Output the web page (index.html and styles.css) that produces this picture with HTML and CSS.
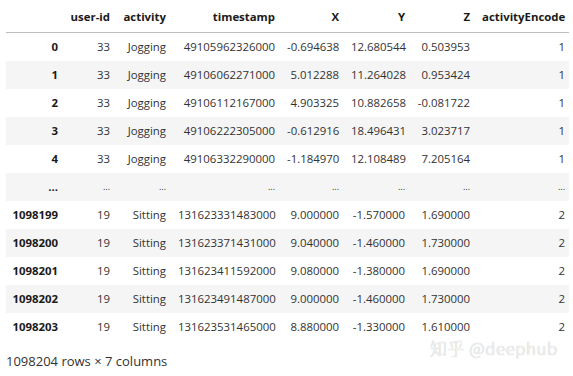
FILE: index.html
```html
<!DOCTYPE html>
<html>
<head>
<meta charset="utf-8">
<link rel="stylesheet" href="styles.css">
</head>
<body>
<div class="output">
<table class="df">
<colgroup>
<col class="c-idx"><col class="c-uid"><col class="c-act"><col class="c-ts"><col class="c-x"><col class="c-y"><col class="c-z"><col class="c-enc">
</colgroup>
<thead>
<tr><th></th><th>user-id</th><th>activity</th><th>timestamp</th><th>X</th><th>Y</th><th>Z</th><th>activityEncode</th></tr>
</thead>
<tbody>
<tr><th>0</th><td>33</td><td>Jogging</td><td>49105962326000</td><td>-0.694638</td><td>12.680544</td><td>0.503953</td><td>1</td></tr>
<tr><th>1</th><td>33</td><td>Jogging</td><td>49106062271000</td><td>5.012288</td><td>11.264028</td><td>0.953424</td><td>1</td></tr>
<tr><th>2</th><td>33</td><td>Jogging</td><td>49106112167000</td><td>4.903325</td><td>10.882658</td><td>-0.081722</td><td>1</td></tr>
<tr><th>3</th><td>33</td><td>Jogging</td><td>49106222305000</td><td>-0.612916</td><td>18.496431</td><td>3.023717</td><td>1</td></tr>
<tr><th>4</th><td>33</td><td>Jogging</td><td>49106332290000</td><td>-1.184970</td><td>12.108489</td><td>7.205164</td><td>1</td></tr>
<tr class="ellipsis"><th>...</th><td>...</td><td>...</td><td>...</td><td>...</td><td>...</td><td>...</td><td>...</td></tr>
<tr><th>1098199</th><td>19</td><td>Sitting</td><td>131623331483000</td><td>9.000000</td><td>-1.570000</td><td>1.690000</td><td>2</td></tr>
<tr><th>1098200</th><td>19</td><td>Sitting</td><td>131623371431000</td><td>9.040000</td><td>-1.460000</td><td>1.730000</td><td>2</td></tr>
<tr><th>1098201</th><td>19</td><td>Sitting</td><td>131623411592000</td><td>9.080000</td><td>-1.380000</td><td>1.690000</td><td>2</td></tr>
<tr><th>1098202</th><td>19</td><td>Sitting</td><td>131623491487000</td><td>9.000000</td><td>-1.460000</td><td>1.730000</td><td>2</td></tr>
<tr><th>1098203</th><td>19</td><td>Sitting</td><td>131623531465000</td><td>8.880000</td><td>-1.330000</td><td>1.610000</td><td>2</td></tr>
</tbody>
</table>
<p class="shape">1098204 rows × 7 columns</p>
</div>
<div class="watermark">知乎 @deephub</div>
</body>
</html>
```
FILE: styles.css
```css
html, body {
  margin: 0;
  padding: 0;
  background: #ffffff;
}
body {
  font-family: "Open Sans", "Noto Sans", "Noto Sans CJK SC", sans-serif;
  color: #1a1a1a;
  position: relative;
  width: 573px;
  height: 376px;
  overflow: hidden;
}
.output {
  padding: 0 0 0 6px;
}
.df {
  border-collapse: collapse;
  border-spacing: 0;
  table-layout: fixed;
  width: 563px;
  font-size: 11.4px;
}
.c-idx { width: 58px; }
.c-uid { width: 52px; }
.c-act { width: 56px; }
.c-ts { width: 109px; }
.c-x { width: 64px; }
.c-y { width: 66px; }
.c-z { width: 65px; }
.c-enc { width: 93px; }
.df th, .df td {
  text-align: right;
  vertical-align: middle;
  padding: 0 6px;
  height: 28px;
  line-height: 16px;
  white-space: nowrap;
  border: none;
}
.df thead th {
  font-weight: 700;
  height: 30px;
  padding-top: 2px;
  padding-bottom: 0;
  border-bottom: 1px solid #bdbdbd;
}
.df thead th:last-child {
  padding-right: 4px;
}
.df tbody td:last-child {
  padding-right: 4px;
}
.df tbody th {
  font-weight: 700;
}
.df tbody tr:nth-child(even) {
  background: #f5f5f5;
}
.df tbody td {
  color: #333333;
}
.ellipsis td {
  color: #8a8a8a;
  font-size: 9px;
}
.shape {
  margin: 11px 0 0 0;
  font-size: 13px;
  line-height: 18px;
  color: #333333;
}
.watermark {
  position: absolute;
  left: 430px;
  top: 337px;
  font-size: 17px;
  line-height: 22px;
  font-weight: 300;
  color: #f4f4f4;
  text-shadow: 0 0 1px #b0b0b0;
  letter-spacing: 0.5px;
  font-family: "Noto Sans CJK SC", "Open Sans", sans-serif;
}
```
